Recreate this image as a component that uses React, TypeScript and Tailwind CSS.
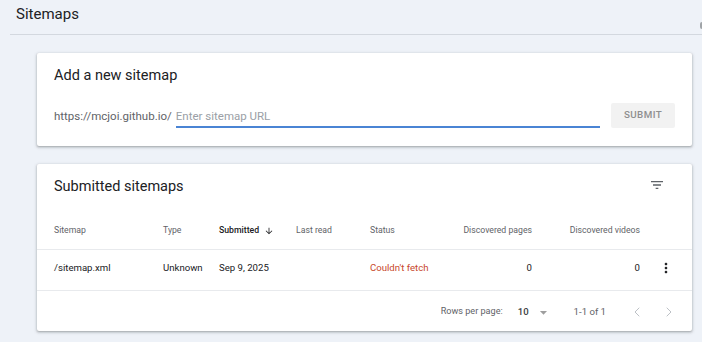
import { ChevronLeft, ChevronRight } from "lucide-react";

const cols = [
  { label: "Sitemap", w: "w-[109px]" },
  { label: "Type", w: "w-[56px]" },
  { label: "Submitted", w: "w-[77px]" },
  { label: "Last read", w: "w-[74px]" },
  { label: "Status", w: "w-[90px]" },
];

function FilterIcon() {
  return (
    <svg width="16" height="16" viewBox="0 0 24 24" fill="#5f6368">
      <path d="M10 18h4v-2h-4v2zM3 6v2h18V6H3zm3 7h12v-2H6v2z" />
    </svg>
  );
}

function MoreVert() {
  return (
    <svg width="16" height="16" viewBox="0 0 24 24" fill="#202124">
      <path d="M12 8c1.1 0 2-.9 2-2s-.9-2-2-2-2 .9-2 2 .9 2 2 2zm0 2c-1.1 0-2 .9-2 2s.9 2 2 2 2-.9 2-2-.9-2-2-2zm0 6c-1.1 0-2 .9-2 2s.9 2 2 2 2-.9 2-2-.9-2-2-2z" />
    </svg>
  );
}

export default function App() {
  return (
    <div className="w-[702px] h-[342px] overflow-hidden bg-[#eef2f8] font-['Roboto',sans-serif] text-[#202124]">
      {/* Titre */}
      <div className="ml-[10px] h-[35px] border-b border-[#d3d8df] flex justify-between">
        <div className="pl-[6px] pt-[4px] text-[15px] leading-[20px]">Sitemaps</div>
        <div className="mt-[22px] w-[2px] h-[7px] rounded-l-sm bg-[#a0a4a8]"></div>
      </div>

      <div className="pl-[37px] pr-[10px] pt-[18px] flex flex-col gap-[18px]">
        {/* Add a new sitemap */}
        <div className="bg-white rounded-[2px] shadow-[0_1px_2px_0_rgba(60,64,67,0.3),0_1px_3px_1px_rgba(60,64,67,0.15)] pt-[13px] pb-[18px] pl-[17px] pr-[17px]">
          <div className="text-[14.5px] leading-[20px]">Add a new sitemap</div>
          <div className="mt-[17px] flex items-center h-[25px]">
            <span className="pt-[3px] text-[11.5px] text-[#5f6368] mr-[4px]">https://mcjoi.github.io/</span>
            <div className="flex-1 h-[25px] flex items-center border-b-2 border-[#4a84d4]">
              <input
                className="w-full pt-[4px] text-[11.5px] text-[#202124] outline-none placeholder:text-[#9aa0a6]"
                placeholder="Enter sitemap URL"
              />
            </div>
            <button className="ml-[11px] w-[64px] h-[25px] bg-[#f2f2f2] text-[#8f8f8f] text-[9.8px] font-medium tracking-[0.4px] rounded-[2px]">
              SUBMIT
            </button>
          </div>
        </div>

        {/* Submitted sitemaps */}
        <div className="bg-white rounded-[2px] shadow-[0_1px_2px_0_rgba(60,64,67,0.3),0_1px_3px_1px_rgba(60,64,67,0.15)] pt-[13px]">
          <div className="flex items-center justify-between pl-[17px] pr-[27px] h-[20px]">
            <div className="text-[14.5px] leading-[20px]">Submitted sitemaps</div>
            <div className="-mt-[5px]">
              <FilterIcon />
            </div>
          </div>

          {/* En-tete */}
          <div className="mt-[13px] h-[40px] pt-[3px] flex items-center pl-[17px] border-b border-[#e8eaed] text-[8.7px] text-[#5f6368]">
            {cols.map((c) =>
              c.label === "Submitted" ? (
                <div key={c.label} className={`${c.w} flex items-center gap-[5px] font-medium text-[#202124]`}>
                  Submitted
                  <svg width="10" height="10" viewBox="0 0 24 24" fill="#202124">
                    <path d="M20 12l-1.41-1.41L13 16.17V4h-2v12.17l-5.58-5.59L4 12l8 8 8-8z" />
                  </svg>
                </div>
              ) : (
                <div key={c.label} className={c.w}>
                  {c.label}
                </div>
              )
            )}
            <div className="w-[72px] text-right">Discovered pages</div>
            <div className="w-[108px] text-right">Discovered videos</div>
            <div className="w-[52px]"></div>
          </div>

          {/* Ligne */}
          <div className="h-[41px] pb-[4px] flex items-center pl-[17px] border-b border-[#e8eaed] text-[9.6px] text-[#202124]">
            <div className="w-[109px]">/sitemap.xml</div>
            <div className="w-[56px]">Unknown</div>
            <div className="w-[77px]">Sep 9, 2025</div>
            <div className="w-[74px]"></div>
            <div className="w-[90px] text-[#c8472c]">Couldn't fetch</div>
            <div className="w-[72px] text-right">0</div>
            <div className="w-[108px] text-right">0</div>
            <div className="w-[52px] flex justify-center">
              <MoreVert />
            </div>
          </div>

          {/* Pagination */}
          <div className="h-[40px] pt-[2px] flex items-center justify-end pr-[15px] text-[9.1px] text-[#5f6368]">
            <span>Rows per page:</span>
            <span className="ml-[15px] text-[9.6px] font-medium text-[#3c4043]">10</span>
            <svg className="ml-[6px]" width="17" height="17" viewBox="0 0 24 24" fill="#9e9e9e">
              <path d="M7 10l5 5 5-5z" />
            </svg>
            <span className="ml-[22px] text-[9.6px]">1-1 of 1</span>
            <ChevronLeft className="ml-[23px] text-[#bdc1c6]" size={16} strokeWidth={1.5} />
            <ChevronRight className="ml-[16px] text-[#bdc1c6]" size={16} strokeWidth={1.5} />
          </div>
        </div>
      </div>
    </div>
  );
}
